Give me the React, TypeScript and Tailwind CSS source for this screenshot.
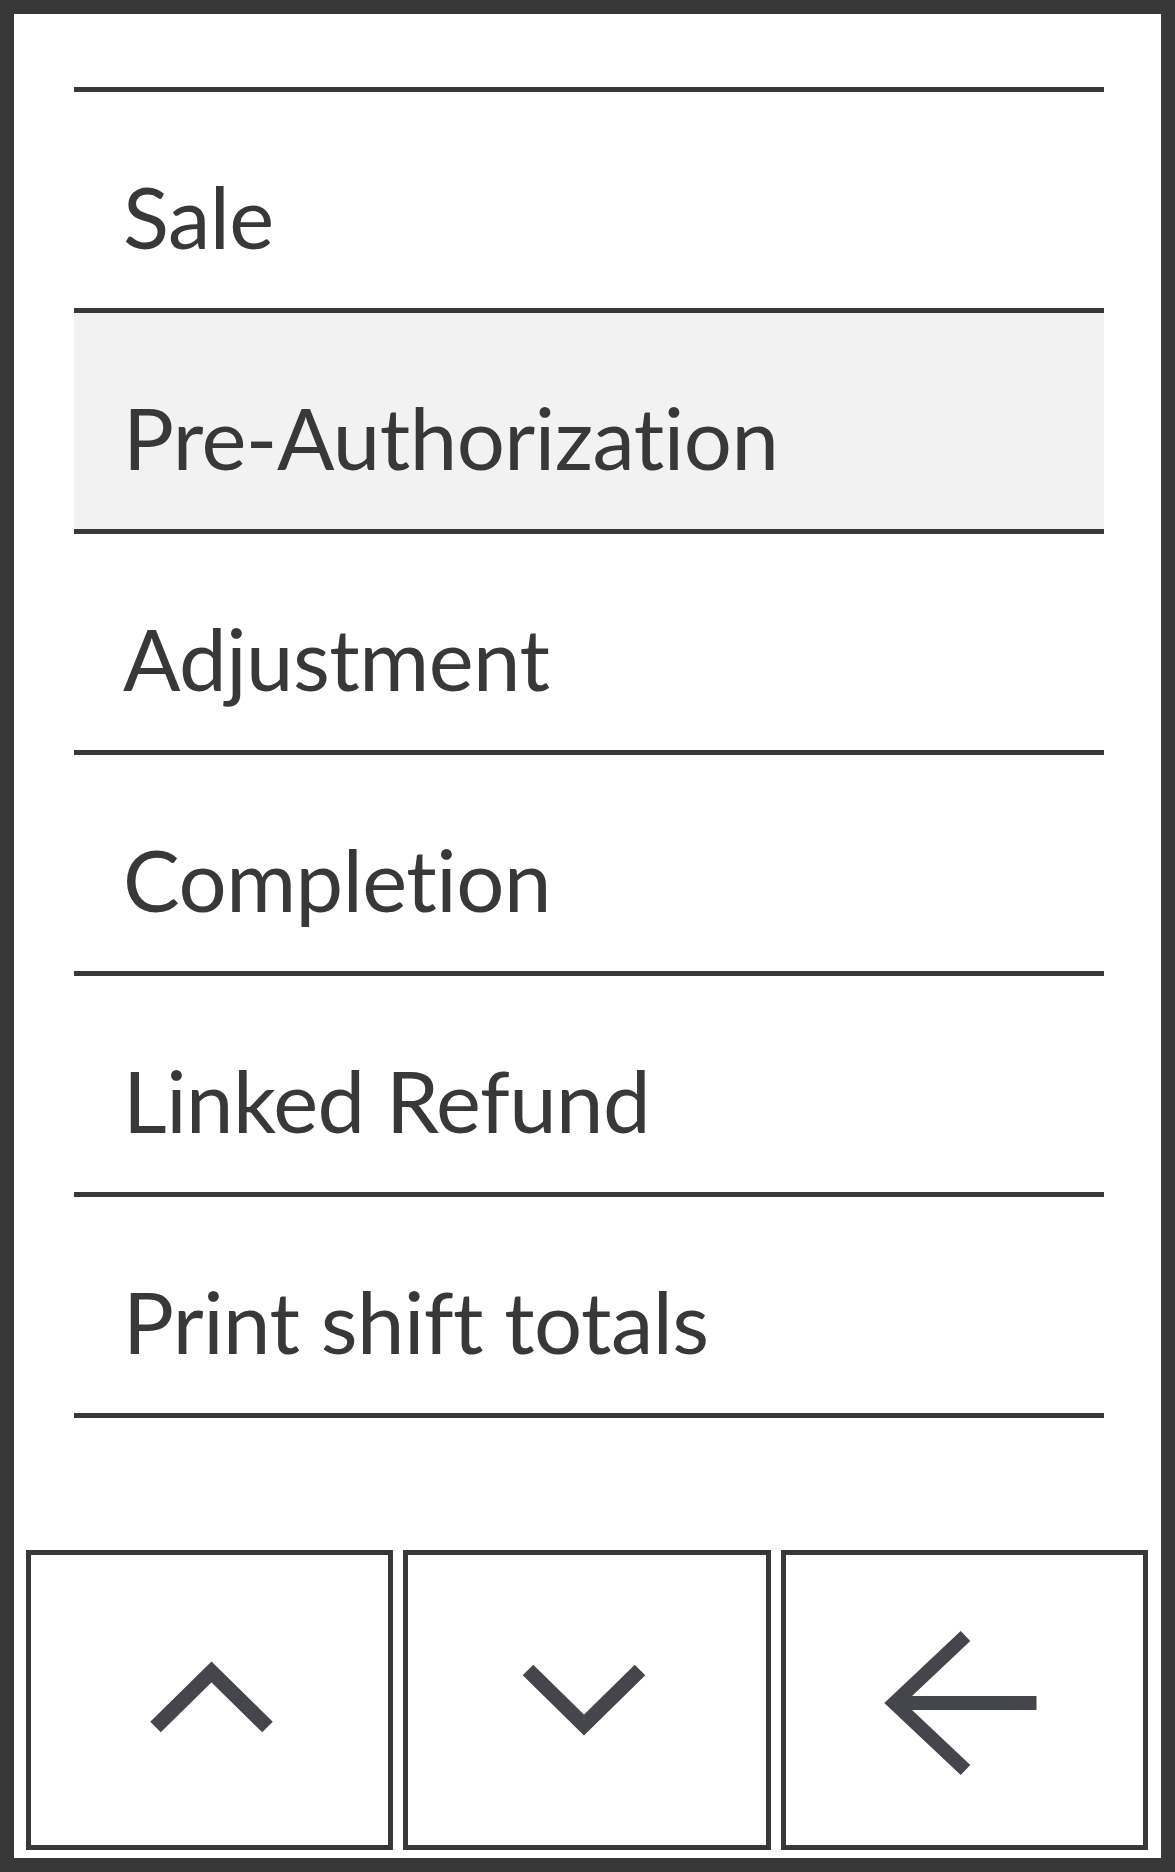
import React from 'react';

// Transaction menu: list of options plus up / down / back keys at the bottom

const items = [
  'Sale',
  'Pre-Authorization',
  'Adjustment',
  'Completion',
  'Linked Refund',
  'Print shift totals',
];

const selected = 1;

function UpIcon() {
  return (
    <svg width="140" height="140" viewBox="0 0 140 140" fill="none">
      <polyline points="15.5,97 71.5,42 127.5,97" stroke="#45464b" strokeWidth="15" strokeLinejoin="miter" strokeLinecap="butt" />
    </svg>
  );
}

function DownIcon() {
  return (
    <svg width="140" height="140" viewBox="0 0 140 140" fill="none">
      <polyline points="11,40 67,95 123,40" stroke="#45464b" strokeWidth="15" strokeLinejoin="miter" strokeLinecap="butt" />
    </svg>
  );
}

function BackIcon() {
  return (
    <svg width="200" height="200" viewBox="0 0 200 200" fill="none">
      <polyline points="101.5,36 30.5,103 101.5,170" stroke="#45464b" strokeWidth="14" strokeLinejoin="miter" strokeLinecap="butt" />
      <line x1="36" y1="103" x2="172.5" y2="103" stroke="#45464b" strokeWidth="14" strokeLinecap="butt" />
    </svg>
  );
}

export default function App() {
  return (
    <div className="w-[1175px] h-[1872px] bg-[#383838] p-[14px]" style={{ fontFamily: 'Lato, "Open Sans", sans-serif' }}>
      <div className="h-full bg-white flex flex-col">
        <ul className="mt-[73px] ml-[60px] mr-[57px] border-t-[5px] border-[#383838]">
          {items.map((label, i) => (
            <li
              key={label}
              className={
                'h-[221px] border-b-[5px] border-[#383838] pl-[49px] pt-[82px] text-[85px] leading-none text-[#383838] [font-variant-ligatures:none] tracking-[-0.5px] ' +
                (i === selected ? 'bg-[#f2f2f2]' : 'bg-white')
              }
            >
              {label}
            </li>
          ))}
        </ul>

        <div className="flex-1" />

        <div className="flex gap-[10px] pl-[12px] pr-[13px] pb-[8px]">
          <button className="flex-1 h-[300px] border-[5px] border-[#383838] bg-white flex items-center justify-center">
            <UpIcon />
          </button>
          <button className="flex-1 h-[300px] border-[5px] border-[#383838] bg-white flex items-center justify-center">
            <DownIcon />
          </button>
          <button className="flex-1 h-[300px] border-[5px] border-[#383838] bg-white flex items-center justify-center">
            <BackIcon />
          </button>
        </div>
      </div>
    </div>
  );
}
